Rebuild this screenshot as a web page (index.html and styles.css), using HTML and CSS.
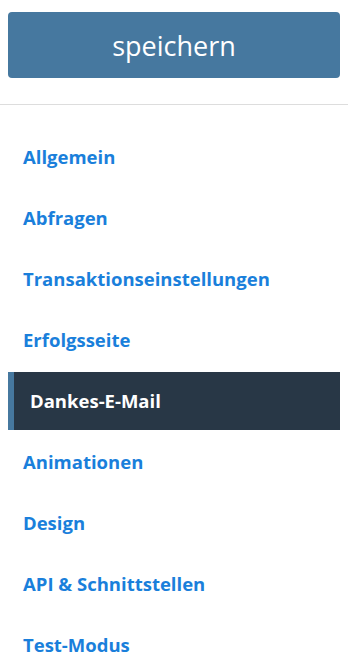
FILE: index.html
```html
<!DOCTYPE html>
<html lang="de">
<head>
    <meta charset="UTF-8">
    <meta name="viewport" content="width=device-width, initial-scale=1.0">
    <title>Einstellungen</title>
    <link rel="stylesheet" href="styles.css">
</head>
<body>
<div class="save-bar">
    <button class="save-button">speichern</button>
</div>
<ul class="side-nav">
    <li><a href="#">Allgemein</a></li>
    <li><a href="#">Abfragen</a></li>
    <li><a href="#">Transaktionseinstellungen</a></li>
    <li><a href="#">Erfolgsseite</a></li>
    <li class="active"><a href="#">Dankes-E-Mail</a></li>
    <li><a href="#">Animationen</a></li>
    <li><a href="#">Design</a></li>
    <li><a href="#">API &amp; Schnittstellen</a></li>
    <li><a href="#">Test-Modus</a></li>
</ul>
</body>
</html>
```

FILE: styles.css
```css
body {
    font-family: "Open Sans", "Noto Sans", sans-serif;
    margin: 0;
    padding: 0;
    background-color: #fff;
}
.save-bar {
    padding: 12px 8px 26px;
    border-bottom: 1px solid #ddd;
}
.save-button {
    display: block;
    width: 100%;
    height: 66px;
    background-color: #46789f;
    color: #fff;
    border: none;
    border-radius: 4px;
    font-family: inherit;
    font-size: 27px;
    cursor: pointer;
}
.side-nav {
    list-style: none;
    margin: 0;
    padding: 23px 8px 0;
}
.side-nav li {
    margin-bottom: 3px;
}
.side-nav a {
    display: block;
    padding: 18px 15px;
    line-height: 22px;
    font-size: 18.5px;
    font-weight: 700;
    color: #1a7fdb;
    text-decoration: none;
}
.side-nav li.active a {
    background-color: #283746;
    border-left: 6px solid #46789f;
    padding-left: 16px;
    color: #fff;
}
```
